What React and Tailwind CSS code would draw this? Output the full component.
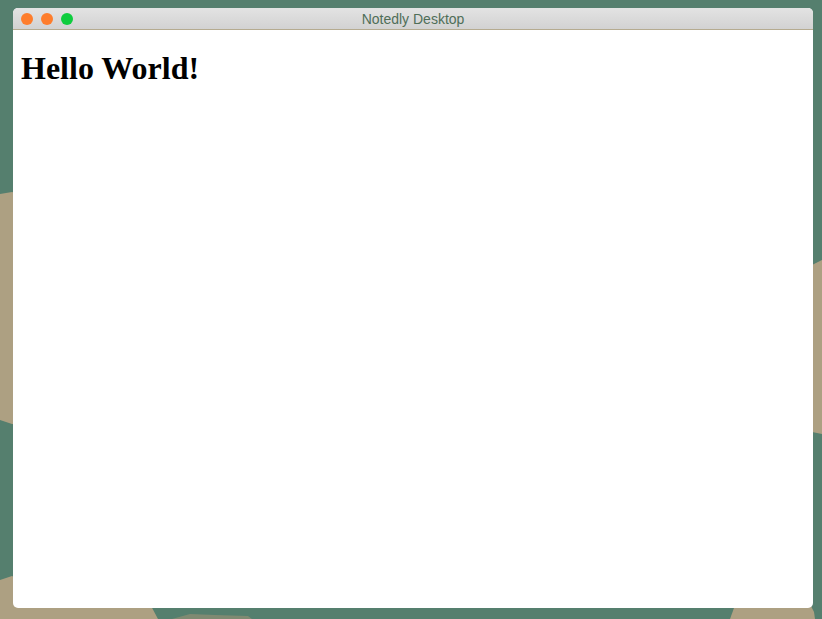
export default function App() {
  return (
    <div className="relative h-[619px] w-[822px] overflow-hidden bg-[#557f6e]">
      {/* desktop wallpaper */}
      <svg className="absolute inset-0" width="822" height="619" viewBox="0 0 822 619">
        <path d="M0 194 L12 192 L40 200 L40 426 L12 424 L0 420 Z" fill="#ada082" />
        <path d="M0 580 L12 576 L40 590 L150 604 L158 619 L0 619 Z" fill="#ada082" />
        <path d="M172 619 L190 614 L215 615 L248 616 L252 619 Z" fill="#7f8a72" />
        <path d="M730 619 L734 608 L760 606 L810 604 L814 612 L815 619 Z" fill="#ada082" />
        <path d="M812 265 L818 262 L822 260 L822 434 L812 432 Z" fill="#ada082" />
      </svg>

      <div className="relative ml-[13px] mt-[8px] flex h-[600px] w-[800px] flex-col overflow-hidden rounded-[5px] bg-white">
        {/* title bar */}
        <div className="relative flex h-[22px] items-center border-b border-[#b5ab90] bg-gradient-to-b from-[#e3e3e3] to-[#d2d2d2]">
          <div className="flex items-center gap-2 pl-[8px] pt-px">
            <span className="h-3 w-3 rounded-full bg-[#fe7d2c]" />
            <span className="h-3 w-3 rounded-full bg-[#fe7d2c]" />
            <span className="h-3 w-3 rounded-full bg-[#0fcd3e]" />
          </div>
          <div className="absolute inset-0 flex items-center justify-center pt-[2px] font-['Liberation_Sans',Arial,sans-serif] text-[14px] text-[#4f6e58]">
            Notedly Desktop
          </div>
        </div>

        {/* content */}
        <div className="flex-1 px-2 pt-[21px]">
          <h1 className="font-['Liberation_Serif','Times_New_Roman',serif] text-[32px] font-bold leading-[35px] text-black">
            Hello World!
          </h1>
        </div>
      </div>
    </div>
  )
}
